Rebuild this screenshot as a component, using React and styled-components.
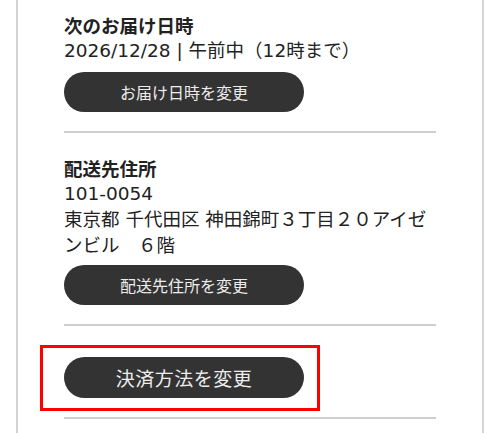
import React from "react";
import styled, { createGlobalStyle } from "styled-components";

const GlobalStyle = createGlobalStyle`
  body {
    margin: 0;
    background: #fff;
    font-family: "DejaVu Sans", "Noto Sans CJK JP", sans-serif;
    color: #222;
  }
`;

const App = () => {
  return (
    <>
      <GlobalStyle />
      <Panel>
        <Section $top={12}>
          <Title>次のお届け日時</Title>
          <Line>2026/12/28 | 午前中（12時まで）</Line>
          <PillButton>お届け日時を変更</PillButton>
        </Section>
        <Divider />
        <Section $top={22}>
          <Title>配送先住所</Title>
          <Line>101-0054</Line>
          <Line>東京都 千代田区 神田錦町３丁目２０アイゼンビル　６階</Line>
          <PillButton $gap={6}>配送先住所を変更</PillButton>
        </Section>
        <Divider />
        <Section $top={31}>
          <Highlight>
            <PillButton $gap={0} $big>
              決済方法を変更
            </PillButton>
            <RedBox />
          </Highlight>
        </Section>
        <Divider />
      </Panel>
    </>
  );
};

export default App;

const Panel = styled.div`
  margin: 0 16px;
  min-height: 100vh;
  box-sizing: border-box;
  border-left: 2px solid #d4d4d4;
  border-right: 2px solid #d4d4d4;
  padding: 0 46px;
`;

const Section = styled.div`
  display: flex;
  flex-direction: column;
  align-items: flex-start;
  padding: ${(p) => p.$top}px 0 19px;
`;

const Title = styled.div`
  font-family: "Noto Sans CJK JP", sans-serif;
  font-size: 18.5px;
  line-height: 26px;
  font-weight: 700;
`;

const Line = styled.div`
  font-size: 18.5px;
  line-height: 26px;
`;

const PillButton = styled.button`
  margin-top: ${(p) => (p.$gap === undefined ? 8 : p.$gap)}px;
  width: 240px;
  height: ${(p) => (p.$big ? 41 : 40)}px;
  border: none;
  border-radius: 21px;
  background: #333;
  color: #ececec;
  font-family: "Noto Sans CJK JP", sans-serif;
  font-size: ${(p) => (p.$big ? 19 : 16)}px;
  letter-spacing: ${(p) => (p.$big ? 0.5 : 0)}px;
  display: flex;
  align-items: center;
  justify-content: center;
  padding: 0;
  cursor: pointer;
`;

const Highlight = styled.div`
  position: relative;
`;

const RedBox = styled.div`
  position: absolute;
  left: -24px;
  top: -12px;
  width: 280px;
  height: 66px;
  box-sizing: border-box;
  border: 3px solid #f00;
  pointer-events: none;
`;

const Divider = styled.div`
  height: 2px;
  background: #cfcfcf;
`;
